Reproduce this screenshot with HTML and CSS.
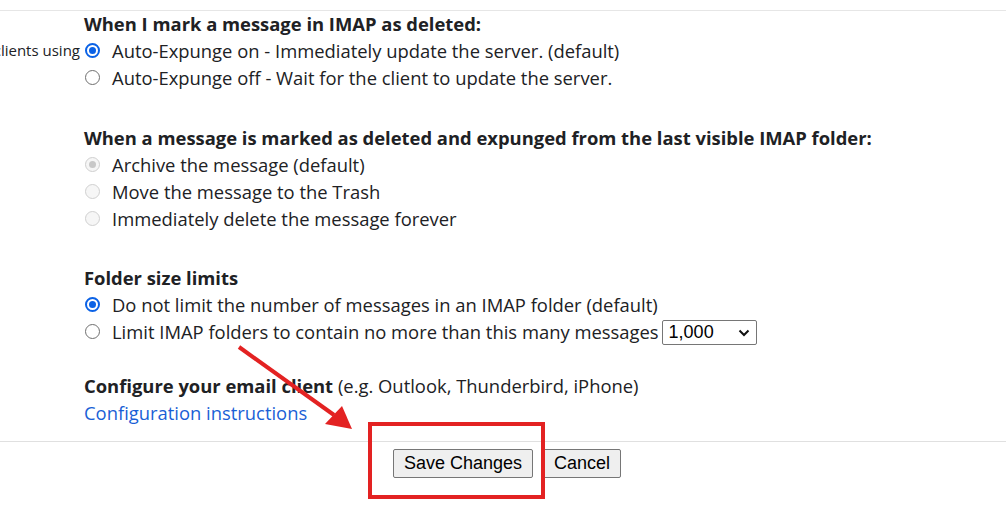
FILE: index.html
```html
<!DOCTYPE html>
<html>
<head>
<meta charset="utf-8">
<link rel="stylesheet" href="styles.css">
</head>
<body>
<div class="page">
  <div class="topline"></div>
  <div class="row">
    <div class="label"><span>(access Gmail from other clients using</span></div>
    <div class="content">
      <div class="section">
        <div class="heading">When I mark a message in IMAP as deleted:</div>
        <div class="opt"><span class="radio on"></span><span>Auto-Expunge on - Immediately update the server. (default)</span></div>
        <div class="opt"><span class="radio"></span><span>Auto-Expunge off - Wait for the client to update the server.</span></div>
      </div>
      <div class="section s2">
        <div class="heading">When a message is marked as deleted and expunged from the last visible IMAP folder:</div>
        <div class="opt dis"><span class="radio on"></span><span>Archive the message (default)</span></div>
        <div class="opt dis"><span class="radio"></span><span>Move the message to the Trash</span></div>
        <div class="opt dis"><span class="radio"></span><span>Immediately delete the message forever</span></div>
      </div>
      <div class="section s3">
        <div class="heading">Folder size limits</div>
        <div class="opt"><span class="radio on"></span><span>Do not limit the number of messages in an IMAP folder (default)</span></div>
        <div class="opt"><span class="radio"></span><span>Limit IMAP folders to contain no more than this many messages</span>
          <span class="select">1,000<svg class="chev" viewBox="0 0 12 8" width="12" height="8"><path d="M1.5 1.5 L6 6 L10.5 1.5" fill="none" stroke="#111" stroke-width="2"/></svg></span>
        </div>
      </div>
      <div class="section s4">
        <div class="line"><b>Configure your email client</b> (e.g. Outlook, Thunderbird, iPhone)</div>
        <div class="line"><a class="link" href="#">Configuration instructions</a></div>
      </div>
    </div>
  </div>
  <div class="bottomline"></div>
  <div class="buttons">
    <button class="btn">Save Changes</button>
    <button class="btn">Cancel</button>
  </div>
  <div class="highlight"></div>
  <svg class="arrow" width="1006" height="507" viewBox="0 0 1006 507">
    <line x1="239" y1="347" x2="334" y2="415" stroke="#e32222" stroke-width="4"/>
    <polygon points="352,429 325,424 342,406" fill="#e32222"/>
  </svg>
</div>
</body>
</html>
```

FILE: styles.css
```css
* { box-sizing: border-box; }
body {
  margin: 0;
  background: #fff;
  font-family: "Open Sans", Roboto, sans-serif;
  color: #202124;
}
.page {
  position: relative;
  width: 1006px;
  height: 507px;
  overflow: hidden;
}
.topline {
  height: 1px;
  margin-top: 10px;
  background: #e6e6e6;
}
.row {
  display: flex;
  margin-top: -1px;
}
.label {
  width: 84px;
  flex: none;
  display: flex;
  justify-content: flex-end;
  overflow: hidden;
  padding-top: 27px;
  padding-right: 4px;
  white-space: nowrap;
  font-size: 15px;
  line-height: 27px;
}
.content {
  flex: 1;
  font-size: 18.4px;
  line-height: 27px;
}
.heading {
  font-weight: 700;
}
.section.s2 { margin-top: 33px; }
.section.s3 { margin-top: 32px; }
.section.s4 { margin-top: 27px; }
.opt {
  display: flex;
  align-items: center;
  height: 27px;
}
.radio {
  width: 15px;
  height: 15px;
  flex: none;
  margin-left: 1px;
  margin-right: 12px;
  border: 1.5px solid #6f6f6f;
  border-radius: 50%;
  position: relative;
  background: #fff;
}
.radio.on {
  border: 2px solid #0b62e6;
}
.radio.on::after {
  content: "";
  position: absolute;
  left: 2px;
  top: 2px;
  width: 7px;
  height: 7px;
  border-radius: 50%;
  background: #0b62e6;
}
.opt.dis .radio {
  border: 1px solid #d0d0d0;
  background: #f6f6f6;
}
.opt.dis .radio.on {
  border: 1.5px solid #cfcfcf;
}
.opt.dis .radio.on::after {
  left: 2.5px;
  top: 2.5px;
  width: 7px;
  height: 7px;
  background: #c8c8c8;
}
.select {
  display: inline-flex;
  align-items: center;
  justify-content: space-between;
  margin-left: 3px;
  margin-top: 2px;
  width: 95px;
  height: 25px;
  padding: 0 6px 0 6px;
  border: 1px solid #767676;
  border-radius: 2px;
  font-family: "Liberation Sans", Arial, sans-serif;
  font-size: 18px;
  color: #000;
}
.chev { display: block; }
.link {
  color: #1a5fd6;
  text-decoration: none;
}
.bottomline {
  height: 1px;
  margin-top: 15px;
  background: #e0e0e0;
}
.buttons {
  display: flex;
  justify-content: center;
  gap: 10px;
  padding-left: 8px;
  margin-top: 7px;
}
.btn {
  height: 29px;
  padding: 0 10px;
  font-family: "Liberation Sans", Arial, sans-serif;
  font-size: 18px;
  color: #000;
  background: #efefef;
  border: 1px solid #767676;
  border-radius: 2px;
}
.highlight {
  position: absolute;
  left: 368px;
  top: 422px;
  width: 177px;
  height: 77px;
  border: 4px solid #e32222;
}
.arrow {
  position: absolute;
  left: 0;
  top: 0;
  pointer-events: none;
}
```
